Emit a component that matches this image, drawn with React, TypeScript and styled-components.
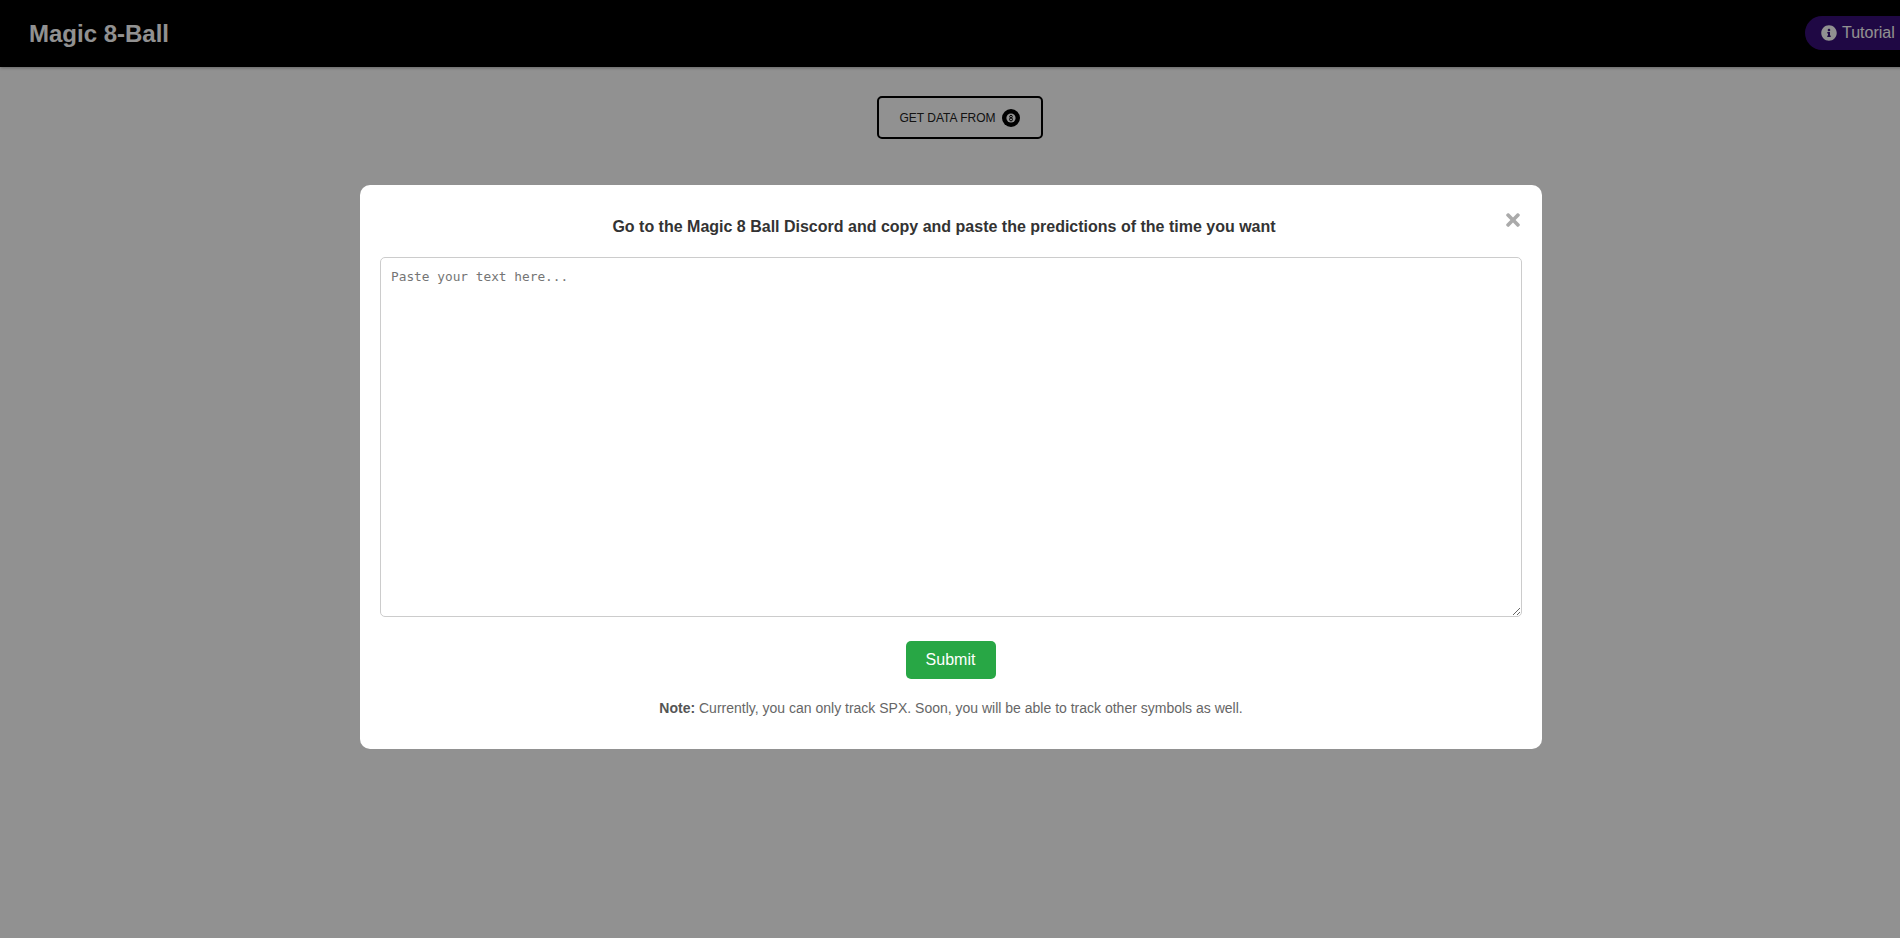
import React from 'react';
import styled, { createGlobalStyle } from 'styled-components';
import { FaInfoCircle, FaTimes } from 'react-icons/fa';

const GlobalStyle = createGlobalStyle`
	html, body {
		margin: 0;
		padding: 0;
		height: 100%;
		overflow: hidden;
		background: #fff;
		font-family: 'Liberation Sans', Arial, sans-serif;
	}
	* {
		box-sizing: border-box;
	}
`;

const Header = styled.header`
	display: flex;
	align-items: center;
	justify-content: space-between;
	width: calc(100% + 58px);
	height: 67px;
	padding: 0 29px;
	background: #000;
	box-shadow: 0 1px 3px rgba(0, 0, 0, 0.3);
`;

const Brand = styled.h1`
	margin: 0;
	font-size: 24px;
	font-weight: 700;
	color: #fff;
`;

const TutorialPill = styled.button`
	display: flex;
	align-items: center;
	gap: 5px;
	width: 124px;
	height: 34px;
	margin-bottom: 2px;
	padding: 0 16px;
	border: none;
	border-radius: 17px;
	background: #380f78;
	color: #fff;
	font-family: inherit;
	font-size: 16px;
`;

const Main = styled.main`
	display: flex;
	justify-content: center;
	padding: 29px 0 0 19px;
`;

const DataButton = styled.button`
	display: flex;
	align-items: center;
	justify-content: center;
	gap: 6px;
	width: 166px;
	height: 43px;
	border: 2px solid #000;
	border-radius: 5px;
	background: #fff;
	color: #222;
	font-family: inherit;
	font-size: 12px;
`;

const Overlay = styled.div`
	position: fixed;
	inset: 0 0 2px 0;
	display: flex;
	justify-content: center;
	padding: 185px 0 0 2px;
	background: rgba(0, 0, 0, 0.43);
`;

const Modal = styled.section`
	position: relative;
	display: flex;
	flex-direction: column;
	align-items: center;
	width: 1182px;
	height: 564px;
	padding: 32px 20px 0;
	border-radius: 10px;
	background: #fff;
`;

const CloseIcon = styled(FaTimes)`
	position: absolute;
	top: 25px;
	right: 19px;
	font-size: 20px;
	color: #aaa;
`;

const Title = styled.h2`
	margin: 0 0 20px;
	padding-right: 14px;
	font-size: 16px;
	line-height: 20px;
	font-weight: 700;
	color: #333;
`;

const TextArea = styled.textarea`
	display: block;
	width: 100%;
	height: 360px;
	padding: 11px 10px;
	border: 1px solid #ccc;
	border-radius: 5px;
	outline: none;
	resize: vertical;
	font-family: 'DejaVu Sans Mono', monospace;
	font-size: 12.8px;
	line-height: 16px;
`;

const SubmitButton = styled.button`
	width: 90px;
	height: 38px;
	margin: 24px 1px 0 0;
	border: none;
	border-radius: 5px;
	background: #28a745;
	color: #fff;
	font-family: inherit;
	font-size: 16px;
`;

const Note = styled.p`
	margin: 21px 0 0;
	font-size: 14px;
	line-height: 17px;
	color: #666;

	strong {
		color: #555;
	}
`;

// 8번 공 아이콘
const EightBall = () => (
	<svg width='18' height='18' viewBox='0 0 18 18'>
		<circle cx='9' cy='9' r='9' fill='#000' />
		<circle cx='9' cy='9' r='4.6' fill='#fff' />
		<circle cx='9' cy='7.6' r='1.3' fill='none' stroke='#000' strokeWidth='1' />
		<circle cx='9' cy='10.4' r='1.5' fill='none' stroke='#000' strokeWidth='1' />
	</svg>
);

const App: React.FC = () => (
	<>
		<GlobalStyle />
		<Header>
			<Brand>Magic 8-Ball</Brand>
			<TutorialPill>
				<FaInfoCircle size={16} />
				Tutorial
			</TutorialPill>
		</Header>
		<Main>
			<DataButton>
				GET DATA FROM
				<EightBall />
			</DataButton>
		</Main>
		<Overlay>
			<Modal>
				<CloseIcon />
				<Title>Go to the Magic 8 Ball Discord and copy and paste the predictions of the time you want</Title>
				<TextArea placeholder='Paste your text here...' />
				<SubmitButton>Submit</SubmitButton>
				<Note>
					<strong>Note:</strong> Currently, you can only track SPX. Soon, you will be able to track other symbols as well.
				</Note>
			</Modal>
		</Overlay>
	</>
);

export default App;
